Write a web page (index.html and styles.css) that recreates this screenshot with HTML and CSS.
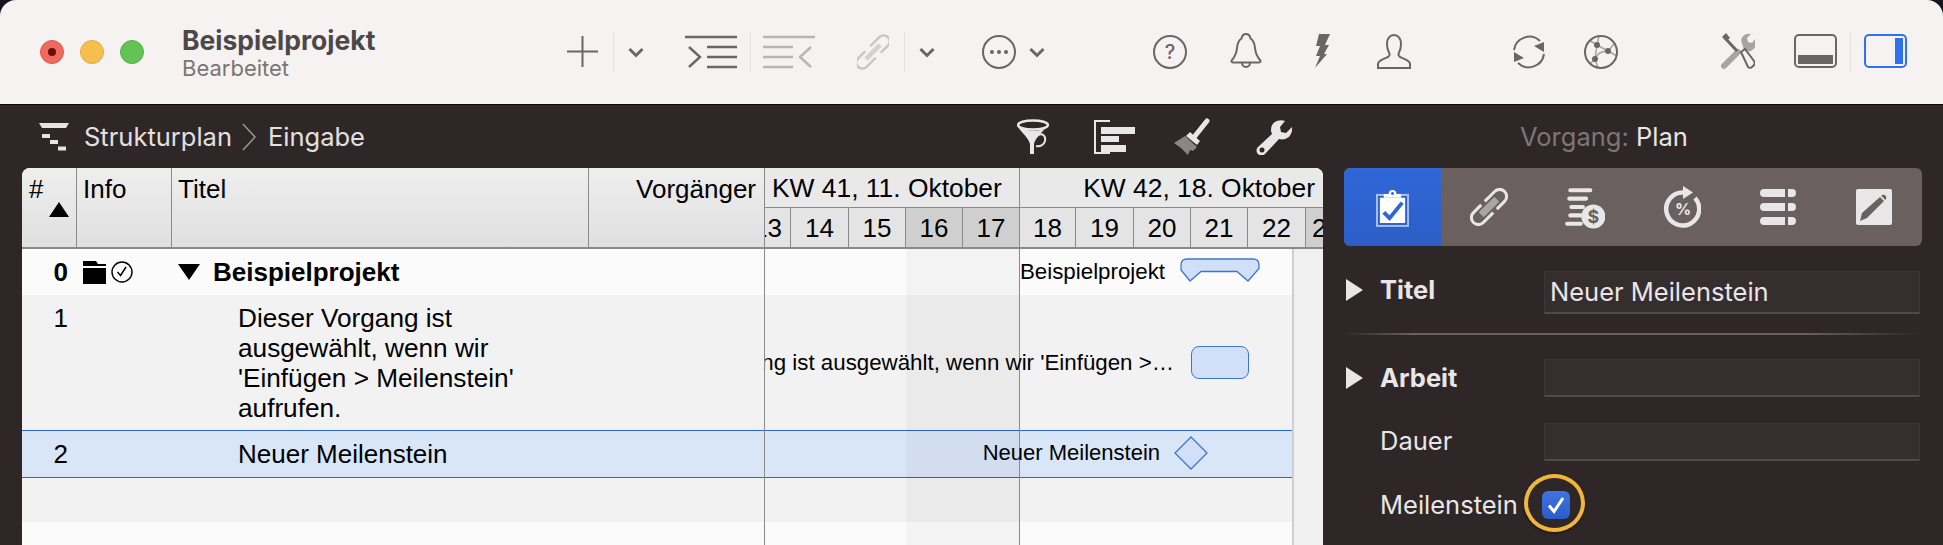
FILE: index.html
```html
<!DOCTYPE html>
<html lang="de">
<head>
<meta charset="utf-8">
<title>Beispielprojekt</title>
<link rel="stylesheet" href="styles.css">
</head>
<body>
<div class="window">
  <header class="titlebar">
    <div class="lights">
      <span class="light red"></span>
      <span class="light yellow"></span>
      <span class="light green"></span>
    </div>
    <div class="doc">
      <div class="doc-name">Beispielprojekt</div>
      <div class="doc-state">Bearbeitet</div>
    </div>
    <div class="toolbar">
      <svg class="tb w32 m-add" viewBox="0 0 32 44"><path class="ln" d="M0 21.5H31M15.5 6V37"/></svg>
      <span class="tsep m14"></span>
      <svg class="tb w16 m14" viewBox="0 0 16 44"><path class="chev" d="M1.5 19l6.5 6.5 6.5-6.5"/></svg>
      <svg class="tb w52 m41" viewBox="0 0 52 44"><path class="ln2" d="M0 7H52M22 17H52M22 27H52M22 37H52M4 17l11 10-11 10"/></svg>
      <span class="tsep m13"></span>
      <svg class="tb w52 m12" viewBox="0 0 52 44"><path class="ln2 dim" d="M0 7H52M0 17H30M0 27H30M0 37H30M48 17L37 27l11 10"/></svg>
      <svg class="tb w32 m42" viewBox="0 0 32 44"><g transform="rotate(45 16 22)"><path class="clip" d="M10 20V7a6 6 0 0 1 12 0V17M22 24V37a6 6 0 0 1-12 0V27"/><path class="clip-bar" d="M16 12V32"/></g></svg>
      <span class="tsep m15"></span>
      <svg class="tb w16 m14" viewBox="0 0 16 44"><path class="chev" d="M1.5 19l6.5 6.5 6.5-6.5"/></svg>
      <svg class="tb w34 m47" viewBox="0 0 34 44"><circle class="ln" cx="17" cy="22" r="16"/><circle class="dot" cx="10" cy="22" r="2"/><circle class="dot" cx="17" cy="22" r="2"/><circle class="dot" cx="24" cy="22" r="2"/></svg>
      <svg class="tb w16 m13" viewBox="0 0 16 44"><path class="chev" d="M1.5 19l6.5 6.5 6.5-6.5"/></svg>
      <svg class="tb w34 m108" viewBox="0 0 34 44"><circle class="ln" cx="17" cy="22" r="16"/><text class="qm" x="17" y="29">?</text></svg>
      <svg class="tb w32 m43" viewBox="0 0 32 44"><path class="ln" d="M16 4c-2.500 0-4 2-4.500 4.500C9 10 7.500 13 7 18c-.5 5-1.500 8-5 12-1 1.200-.5 2.500 1 2.500h26c1.500 0 2-1.300 1-2.500-3.500-4-4.500-7-5-12-.5-5-2-8-4.500-9.500C20 6 18.500 4 16 4zM12 33a4 4 0 0 0 8 0"/></svg>
      <svg class="tb w16 m52" viewBox="0 0 16 44"><path class="fill" d="M5 4H16L11 15H15L10 24H13L1 38 6 26H2L6 16H2z"/></svg>
      <svg class="tb w34 m47" viewBox="0 0 34 44"><path class="ln" d="M1 38v-4c0-3 4-4.500 9-6.500 3-1.200 3-3 2-5-1.500-2.500-2-5-2-9C10 9 12.500 5 17 5s7 4 7 8.500c0 4-.5 6.500-2 9-1 2-1 3.800 2 5 5 2 9 3.500 9 6.500v4z"/></svg>
      <svg class="tb w34 m101" viewBox="0 0 34 44"><path class="ln" d="M2 20A15.500 15.500 0 0 1 28 11M32 24A15.500 15.500 0 0 1 6 33"/><path class="fill" d="M22 16l10-4V22zM12 28l-10 4V22z"/></svg>
      <svg class="tb w34 m38" viewBox="0 0 34 44"><path class="ln-thin" d="M13 15L5 10M13 15L15 6M24 21L30 14M24 21L33 26M11 29L6 34M11 29L14 38M13 15L24 21M24 21C18 21 13 24 11 29M13 15L11 29"/><circle class="ln" cx="17" cy="22" r="16"/><circle class="fill" cx="13" cy="15" r="3"/><circle class="fill" cx="24" cy="21" r="3"/><circle class="fill" cx="11" cy="29" r="3"/></svg>
      <svg class="tb w34 m103" viewBox="0 0 34 44"><path class="wr" d="M3 36L17 22"/><path class="wr-head" d="M20 10a8 8 0 0 1 10-6l-4 4 1 4 4 1 3-4a8 8 0 0 1-11 11z"/><path class="sd" d="M4 8L16 21"/><path class="sd-tip" d="M1 7l4-4 4 5-4 3z"/><path class="ln" d="M20 22l4-3 9 12c1 2 1 3 0 4l-2 2c-1 1-3 1-4 0z"/></svg>
      <svg class="tb w43 m39" viewBox="0 0 43 44"><rect class="ln" x="1" y="5" width="41" height="32" rx="4"/><rect class="fill" x="4" y="25" width="35" height="9"/></svg>
      <span class="tsep m13"></span>
      <svg class="tb w43 m13" viewBox="0 0 43 44"><rect class="ln-blue" x="1" y="5" width="41" height="32" rx="4"/><rect class="fill-blue" x="31" y="8" width="8" height="26"/></svg>
    </div>
  </header>

  <div class="subbar">
    <svg class="struct" viewBox="0 0 32 28"><path d="M1 0H31L28 5H4z"/><path d="M4 11H12V15H4zM12 17H20V21H12zM20 23.500H28V27.500H20z"/></svg>
    <span class="crumb">Strukturplan</span>
    <svg class="crumb-sep" viewBox="0 0 14 28"><path d="M1 1l12 13L1 27"/></svg>
    <span class="crumb">Eingabe</span>
    <div class="view-tools">
      <svg class="vt v-filter" viewBox="0 0 32 36"><ellipse class="ws" cx="16" cy="6" rx="15" ry="4.500"/><path class="wf" d="M1 8C5 14 11 18 13 25V35H17V25C18 20 24 14 28 10 20 13 8 12 1 8z"/><path class="ws-thin" d="M21 16C26 14 29 17 28 22 27 26 23 28 19 27"/></svg>
      <svg class="vt v-align" viewBox="0 0 41 36"><path class="ws-thin2" d="M16 2H1V34H16"/><path class="wf" d="M7 8H41V15H7zM7 17H25V23H7zM7 26H32V33H7z"/></svg>
      <svg class="vt v-brush" viewBox="0 0 38 38"><path class="ws-thick" d="M34 3L22 18"/><path class="wf" d="M17 14L27 23 24 27 13 18z"/><path class="gf" d="M12 18L24 29 20 33 17 32 15 37 10 32 8 30 1 25z"/></svg>
      <svg class="vt v-wrench" viewBox="0 0 37 36"><path class="wf" fill-rule="evenodd" d="M36 8L30 14 25 13 24 8 29 2C24 0 15 2 15 11c0 1 .5 3 1 4L2 28c-2 2-2 5 0 7s5 2 7-.0L23 20c7 2 14-3 13-12zM6 28.500a2.500 2.500 0 1 1 0 5 2.500 2.500 0 0 1 0-5z"/></svg>
    </div>
    <div class="ins-title"><span class="ins-key">Vorgang:</span> Plan</div>
  </div>

  <div class="content">
    <section class="table">
      <div class="thead">
        <div class="th th-num"><span>#</span><i class="sort"></i></div>
        <div class="th">Info</div>
        <div class="th">Titel</div>
        <div class="th th-right">Vorgänger</div>
        <div class="gantt-head">
          <div class="weeks">
            <div class="week">KW 41, 11. Oktober</div>
            <div class="week week-right">KW 42, 18. Oktober</div>
          </div>
          <div class="days">
            <div class="day day-cut-l">13</div>
            <div class="day">14</div>
            <div class="day">15</div>
            <div class="day off">16</div>
            <div class="day off">17</div>
            <div class="day">18</div>
            <div class="day">19</div>
            <div class="day">20</div>
            <div class="day">21</div>
            <div class="day">22</div>
            <div class="day off day-cut-r">23</div>
          </div>
        </div>
      </div>
      <div class="tbody">
        <div class="rows">
          <div class="row r-top">
            <div class="num strong">0</div>
            <div class="info">
              <svg class="i-folder" viewBox="0 0 23 24"><path d="M0 1H13L15 4H23V6H0zM0 8H23V24H0z"/></svg>
              <svg class="i-clock" viewBox="0 0 22 22"><circle cx="11" cy="11" r="10"/><path d="M6.500 11l3 3.500L15 6"/></svg>
            </div>
            <div class="title strong title-group"><i class="disc"></i>Beispielprojekt</div>
          </div>
          <div class="row r-tall">
            <div class="num">1</div>
            <div class="info"></div>
            <div class="title title-wrap">Dieser Vorgang ist ausgewählt, wenn wir 'Einfügen &gt; Meilenstein' aufrufen.</div>
          </div>
          <div class="row r-sel">
            <div class="num">2</div>
            <div class="info"></div>
            <div class="title">Neuer Meilenstein</div>
          </div>
          <div class="row r-empty"></div>
          <div class="row r-rest"></div>
          <div class="canvas">
            <div class="band"></div>
            <div class="vline"></div>
            <div class="glabel gl-1">Beispielprojekt</div>
            <svg class="summary" viewBox="0 0 80 25"><path d="M7 1H73Q79 1 79 7V10.500L68 23 57 13.500H21L10 23 1 12V7Q1 1 7 1Z"/></svg>
            <div class="glabel gl-2">Dieser Vorgang ist ausgewählt, wenn wir 'Einfügen &gt;…</div>
            <div class="bar"></div>
            <div class="glabel gl-3">Neuer Meilenstein</div>
            <svg class="diamond" viewBox="0 0 34 34"><path d="M17 1L33 17 17 33 1 17z"/></svg>
          </div>
        </div>
        <div class="strip"></div>
      </div>
    </section>

    <aside class="inspector">
      <nav class="tabs">
        <div class="tab active">
          <svg class="ti ti-clip" viewBox="0 0 34 40"><rect class="c-frame" x="1" y="7" width="32" height="32"/><rect class="c-sheet" x="4" y="10" width="26" height="26"/><path class="c-clip" d="M8 10V6H13A4 4 0 0 1 21 6H26V10z"/><circle class="c-hole" cx="17" cy="5.500" r="1.500"/><path class="c-check" d="M8 25l6 6L27 15"/></svg>
        </div>
        <div class="tab">
          <svg class="ti ti-link" viewBox="0 0 38 38"><g transform="rotate(45 19 19)"><path class="l-out" d="M12 18V4a7 7 0 0 1 14 0V15M26 20V34a7 7 0 0 1-14 0V23"/><rect class="l-bar" x="15.500" y="8" width="7" height="22" rx="1"/></g></svg>
        </div>
        <div class="tab">
          <svg class="ti" viewBox="0 0 38 42"><path class="coin-l" d="M5 5H24M4 13H20M6 21H17M5 29H15M2 37H15"/><circle class="coin" cx="27" cy="30" r="11.500"/><text class="coin-t" x="27" y="36">$</text></svg>
        </div>
        <div class="tab">
          <svg class="ti" viewBox="-2 0 40 44"><path class="p-arc" d="M20 7.500A16.500 16.500 0 1 0 32 13"/><path class="wf" d="M20 1L30 7.500 20 14z"/><text class="p-t" x="20" y="30">%</text></svg>
        </div>
        <div class="tab">
          <svg class="ti ti-sq" viewBox="0 0 36 36"><path class="wf" d="M4 0H25V8H4a4 4 0 0 1 0-8zM28 0H32a4 4 0 0 1 0 8H28zM4 14H25V22H4a4 4 0 0 1 0-8zM28 14H32a4 4 0 0 1 0 8H28zM4 28H25V36H4a4 4 0 0 1 0-8zM28 28H32a4 4 0 0 1 0 8H28z"/></svg>
        </div>
        <div class="tab">
          <svg class="ti ti-sq" viewBox="0 0 36 36"><rect class="wf" width="36" height="36" rx="2"/><path class="pen" d="M4 32L6 24 24 8 28 12 11 29z"/><path class="pen" d="M26 6a3 3 0 0 1 4 4L29.500 11 25.500 7z"/></svg>
        </div>
      </nav>
      <div class="prop p-title">
        <div class="pl bold"><i class="tri"></i>Titel</div>
        <div class="field f-title">Neuer Meilenstein</div>
      </div>
      <div class="rule"></div>
      <div class="prop p-work">
        <div class="pl bold"><i class="tri"></i>Arbeit</div>
        <div class="field"></div>
      </div>
      <div class="prop p-dur">
        <div class="pl">Dauer</div>
        <div class="field"></div>
      </div>
      <div class="milestone">
        <div class="pl">Meilenstein</div>
        <div class="check">
          <svg viewBox="0 0 28 28"><path d="M7 14.500l5 6L21 7"/></svg>
          <span class="ring"></span>
        </div>
      </div>
    </aside>
  </div>
</div>
</body>
</html>
```
FILE: styles.css
```css
* { box-sizing: border-box; }
html, body { margin: 0; padding: 0; background: #14141c; }
body { width: 1943px; height: 545px; overflow: hidden; font-family: Inter, "Noto Sans", sans-serif; }

.window { width: 1943px; height: 545px; background: #2f2627; border-radius: 16px 16px 0 0; overflow: hidden; display: flex; flex-direction: column; }

/* Title bar */
.titlebar { flex: none; height: 105px; background: #f7f2f2; border-bottom: 1px solid #0c0808; display: flex; align-items: center; padding-left: 40px; }
.lights { display: flex; gap: 16px; }
.light { width: 24px; height: 24px; border-radius: 50%; display: block; position: relative; }
.red { background: #ee6a5f; border: 1px solid #dc5a50; }
.red::after { content: ""; position: absolute; left: 7px; top: 7px; width: 8px; height: 8px; border-radius: 50%; background: #6d0d08; }
.yellow { background: #f5bf4f; border: 1px solid #e2ab3c; }
.green { background: #61c454; border: 1px solid #55b148; }
.doc { width: 385px; margin-left: 38px; margin-top: 2px; }
.doc-name { font-size: 26.500px; line-height: 30px; font-weight: 700; color: #4d4848; white-space: nowrap; }
.doc-state { font-size: 22px; line-height: 26px; color: #7b7575; white-space: nowrap; }
.toolbar { display: flex; align-items: center; height: 44px; }
.tb { display: block; height: 44px; flex: none; }
.tsep { display: block; flex: none; width: 1px; height: 40px; background: #e5e0e0; }
.w16 { width: 16px; } .w32 { width: 32px; } .w34 { width: 34px; } .w43 { width: 43px; } .w52 { width: 52px; }
.m-add { margin-left: 0; }
.m12 { margin-left: 12px; } .m13 { margin-left: 13px; } .m14 { margin-left: 14px; } .m15 { margin-left: 15px; }
.m38 { margin-left: 38px; } .m39 { margin-left: 39px; } .m41 { margin-left: 41px; } .m42 { margin-left: 42px; } .m43 { margin-left: 43px; }
.m47 { margin-left: 47px; } .m52 { margin-left: 52px; } .m101 { margin-left: 101px; } .m103 { margin-left: 103px; } .m108 { margin-left: 108px; }
.ln { fill: none; stroke: #6c6565; stroke-width: 2; }
.ln2 { fill: none; stroke: #6c6565; stroke-width: 2.400; }
.ln2.dim { stroke: #bab4b4; }
.ln-thin { fill: none; stroke: #a9a4a4; stroke-width: 1.500; }
.chev { fill: none; stroke: #6c6565; stroke-width: 3; }
.clip { fill: none; stroke: #c8c3c3; stroke-width: 2.200; }
.clip-bar { fill: none; stroke: #d6d1d1; stroke-width: 4.500; }
.dot, .fill { fill: #6c6565; }
.qm { font-family: Inter, sans-serif; font-size: 20px; font-weight: 500; fill: #6c6565; text-anchor: middle; }
.wr { fill: none; stroke: #a9a4a4; stroke-width: 6; stroke-linecap: round; }
.wr-head { fill: #a9a4a4; }
.sd { fill: none; stroke: #6c6565; stroke-width: 3; }
.sd-tip { fill: #6c6565; }
.ln-blue { fill: none; stroke: #2f72ec; stroke-width: 2; }
.fill-blue { fill: #2f72ec; }

/* Sub bar */
.subbar { flex: none; height: 63px; display: flex; align-items: center; padding-left: 38px; position: relative; }
.struct { width: 32px; height: 28px; flex: none; display: block; }
.struct path { fill: #e6e3e3; }
.crumb { font-size: 25.500px; line-height: 30px; color: #e3e0e0; white-space: nowrap; }
.struct + .crumb { margin-left: 14px; }
.crumb-sep { width: 14px; height: 28px; flex: none; margin: 0 12px 0 10px; }
.crumb-sep path { fill: none; stroke: #9b9595; stroke-width: 1.500; }
.view-tools { display: flex; align-items: center; width: 500px; margin-left: 652px; flex: none; }
.vt { display: block; flex: none; }
.v-filter { width: 32px; height: 36px; margin-left: 0; }
.v-align { width: 41px; height: 36px; margin-left: 45px; }
.v-brush { width: 38px; height: 38px; margin-left: 38px; }
.v-wrench { width: 37px; height: 36px; margin-left: 45px; }
.wf { fill: #e8e6e6; }
.gf { fill: #8b8585; }
.ws { fill: none; stroke: #e8e6e6; stroke-width: 2.500; }
.ws-thin { fill: none; stroke: #e8e6e6; stroke-width: 2; }
.ws-thin2 { fill: none; stroke: #e8e6e6; stroke-width: 2; }
.ws-thick { fill: none; stroke: #e8e6e6; stroke-width: 5; stroke-linecap: round; }
.ins-title { position: absolute; left: 1520px; top: 17px; font-size: 25.500px; line-height: 30px; color: #e8e6e6; white-space: nowrap; }
.ins-key { color: #7d7676; }

/* Content */
.content { flex: 1; display: flex; padding-left: 22px; min-height: 0; }
.table { width: 1301px; flex: none; background: #fbfbfb; border-radius: 8px 8px 0 0; overflow: hidden; display: flex; flex-direction: column; font-family: "Liberation Sans", Arial, sans-serif; font-size: 26px; color: #000; }

.thead { flex: none; height: 81px; display: grid; grid-template-columns: 55px 95px 417px 176px 558px; background: linear-gradient(#eeeeee, #e0e0e0); border-bottom: 2px solid #8a8a8a; }
.th { border-right: 1px solid #8a8a8a; padding: 6px 6px 0 6px; line-height: 30px; white-space: nowrap; }
.th-num { padding-left: 7px; position: relative; }
.th-num span { display: block; }
.sort { position: absolute; left: 27px; top: 34px; width: 0; height: 0; border-left: 10px solid transparent; border-right: 10px solid transparent; border-bottom: 15px solid #000; }
.th-right { text-align: right; padding-right: 8px; }
.gantt-head { display: flex; flex-direction: column; overflow: hidden; }
.weeks { flex: none; height: 40px; display: grid; grid-template-columns: 255px 303px; border-bottom: 1px solid #8a8a8a; }
.week { padding: 1px 8px 0 7px; font-size: 26.400px; line-height: 38px; white-space: nowrap; background: #e9e9e9; border-right: 1px solid #8a8a8a; }
.week-right { text-align: right; border-right: 0; }
.days { flex: 1; display: grid; grid-template-columns: 26px 58px 57px 57px 57px 56px 58px 57px 57px 58px 17px; }
.day { background: #e4e4e4; border-right: 1px solid #8a8a8a; text-align: center; line-height: 40px; overflow: hidden; white-space: nowrap; }
.off { background: #cfcfcf; }
.day-cut-l { display: flex; justify-content: flex-end; padding-right: 8px; }
.day-cut-r { text-align: left; padding-left: 6px; border-right: 0; }

.tbody { flex: 1; display: flex; min-height: 0; }
.rows { width: 1270px; flex: none; display: flex; flex-direction: column; position: relative; overflow: hidden; }
.strip { flex: 1; background: #f0f0f0; border-left: 2px solid #cfcfcf; }
.row { flex: none; display: grid; grid-template-columns: 55px 95px 1fr; align-items: center; line-height: 30px; }
.r-top { height: 46px; background: #fbfbfb; }
.r-tall { height: 135px; background: #f2f2f2; align-items: start; padding-top: 8px; }
.r-sel { height: 48px; background: #d9e6f7; border-top: 1px solid #2a64d6; border-bottom: 1px solid #2a64d6; }
.r-empty { height: 44px; background: #f2f2f2; }
.r-rest { flex: 1; background: #fbfbfb; }
.num { text-align: right; padding-right: 9px; }
.strong { font-weight: 700; }
.info { display: flex; align-items: center; padding-left: 6px; gap: 5px; }
.i-folder { width: 23px; height: 24px; display: block; fill: #000; }
.i-clock { width: 22px; height: 22px; display: block; }
.i-clock circle, .i-clock path { fill: none; stroke: #000; stroke-width: 1.400; }
.title { padding-left: 66px; white-space: nowrap; }
.title-group { padding-left: 6px; display: flex; align-items: center; }
.disc { flex: none; width: 0; height: 0; border-left: 11px solid transparent; border-right: 11px solid transparent; border-top: 16px solid #000; margin-right: 13px; }
.title-wrap { white-space: normal; width: 366px; font-size: 26.200px; }

.canvas { position: absolute; left: 742px; top: 0; bottom: 0; width: 528px; overflow: hidden; border-left: 1px solid #8a8a8a; font-size: 22px; line-height: 26px; }
.band { position: absolute; left: 141px; top: 0; bottom: 0; width: 113px; background: rgba(0, 0, 0, .03); }
.vline { position: absolute; left: 254px; top: 0; bottom: 0; width: 1px; background: #8a8a8a; }
.glabel { position: absolute; white-space: nowrap; }
.gl-1 { left: 255px; top: 10px; font-size: 22.300px; }
.gl-2 { right: 118px; top: 101px; font-size: 22.300px; }
.gl-3 { right: 132px; top: 191px; }
.summary { position: absolute; left: 415px; top: 9px; width: 80px; height: 25px; }
.summary path, .diamond path { fill: #d1e0f8; stroke: #3d77c9; stroke-width: 1.300; }
.bar { position: absolute; left: 426px; top: 97px; width: 58px; height: 33px; background: #d1e0f8; border: 1px solid #3d77c9; border-radius: 8px; }
.diamond { position: absolute; left: 409px; top: 187px; width: 34px; height: 34px; }

/* Inspector */
.inspector { width: 578px; flex: none; margin-left: 21px; color: #e8e6e6; font-size: 25.500px; }
.tabs { height: 78px; display: grid; grid-template-columns: 97px repeat(5, 1fr); background: #6a6060; border-radius: 6px; overflow: hidden; }
.tab { display: flex; align-items: center; justify-content: center; }
.active { background: linear-gradient(#2f66d8, #2c5ec6); }
.ti { display: block; width: 40px; height: 44px; }
.ti-clip { width: 33px; height: 39px; }
.ti-link { width: 38px; height: 38px; }
.ti-sq { width: 36px; height: 36px; }
.c-frame { fill: none; stroke: #a8c0ef; stroke-width: 2; }
.c-sheet, .c-clip { fill: #ffffff; }
.c-hole { fill: #2f66d8; }
.c-check { fill: none; stroke: #2f66d5; stroke-width: 4; }
.l-out { fill: none; stroke: #e8e6e6; stroke-width: 3; }
.l-bar { fill: #a9a5a5; }
.coin-l { fill: none; stroke: #e8e6e6; stroke-width: 4; stroke-linecap: round; }
.coin { fill: #e8e6e6; }
.coin-t { font-family: Inter, sans-serif; font-size: 17px; font-weight: 700; fill: #6a6060; text-anchor: middle; }
.p-arc { fill: none; stroke: #e8e6e6; stroke-width: 4.500; }
.p-t { font-family: Inter, sans-serif; font-size: 16px; font-weight: 700; fill: #e8e6e6; text-anchor: middle; }
.pen { fill: #6a6060; }

.prop { display: grid; grid-template-columns: 200px 376px; align-items: center; }
.p-title { margin-top: 25px; height: 43px; }
.p-work { margin-top: 24px; height: 38px; }
.p-dur { margin-top: 26px; height: 38px; }
.p-dur .pl { margin-top: -2px; }
.field { height: 100%; background: #362d2e; border: 1px solid #3e3536; border-bottom: 2px solid #51494a; padding: 0 5px; line-height: 40px; color: #e8e6e6; white-space: nowrap; }
.pl { position: relative; padding-left: 36px; line-height: 30px; white-space: nowrap; }
.bold { font-weight: 700; }
.p-title .pl { margin-top: -5px; }
.tri { position: absolute; left: 2px; top: 4px; width: 0; height: 0; border-top: 11px solid transparent; border-bottom: 11px solid transparent; border-left: 17px solid #e8e6e6; }
.rule { height: 2px; margin: 19px 2px 0 0; background: linear-gradient(90deg, transparent, #6a6060 12%, #6a6060 80%, transparent); }
.milestone { margin-top: 30px; display: flex; align-items: center; height: 28px; }
.check { position: relative; width: 28px; height: 28px; margin-left: 24px; background: linear-gradient(#3f74e2, #2b5cc8); border-radius: 6px; flex: none; }
.check svg { display: block; width: 28px; height: 28px; }
.check path { fill: none; stroke: #fff; stroke-width: 3; }
.ring { position: absolute; left: -18px; top: -17px; width: 61px; height: 58px; border: 4px solid #f0b63c; border-radius: 50%; box-shadow: 0 1px 3px rgba(0, 0, 0, .5); }
```
